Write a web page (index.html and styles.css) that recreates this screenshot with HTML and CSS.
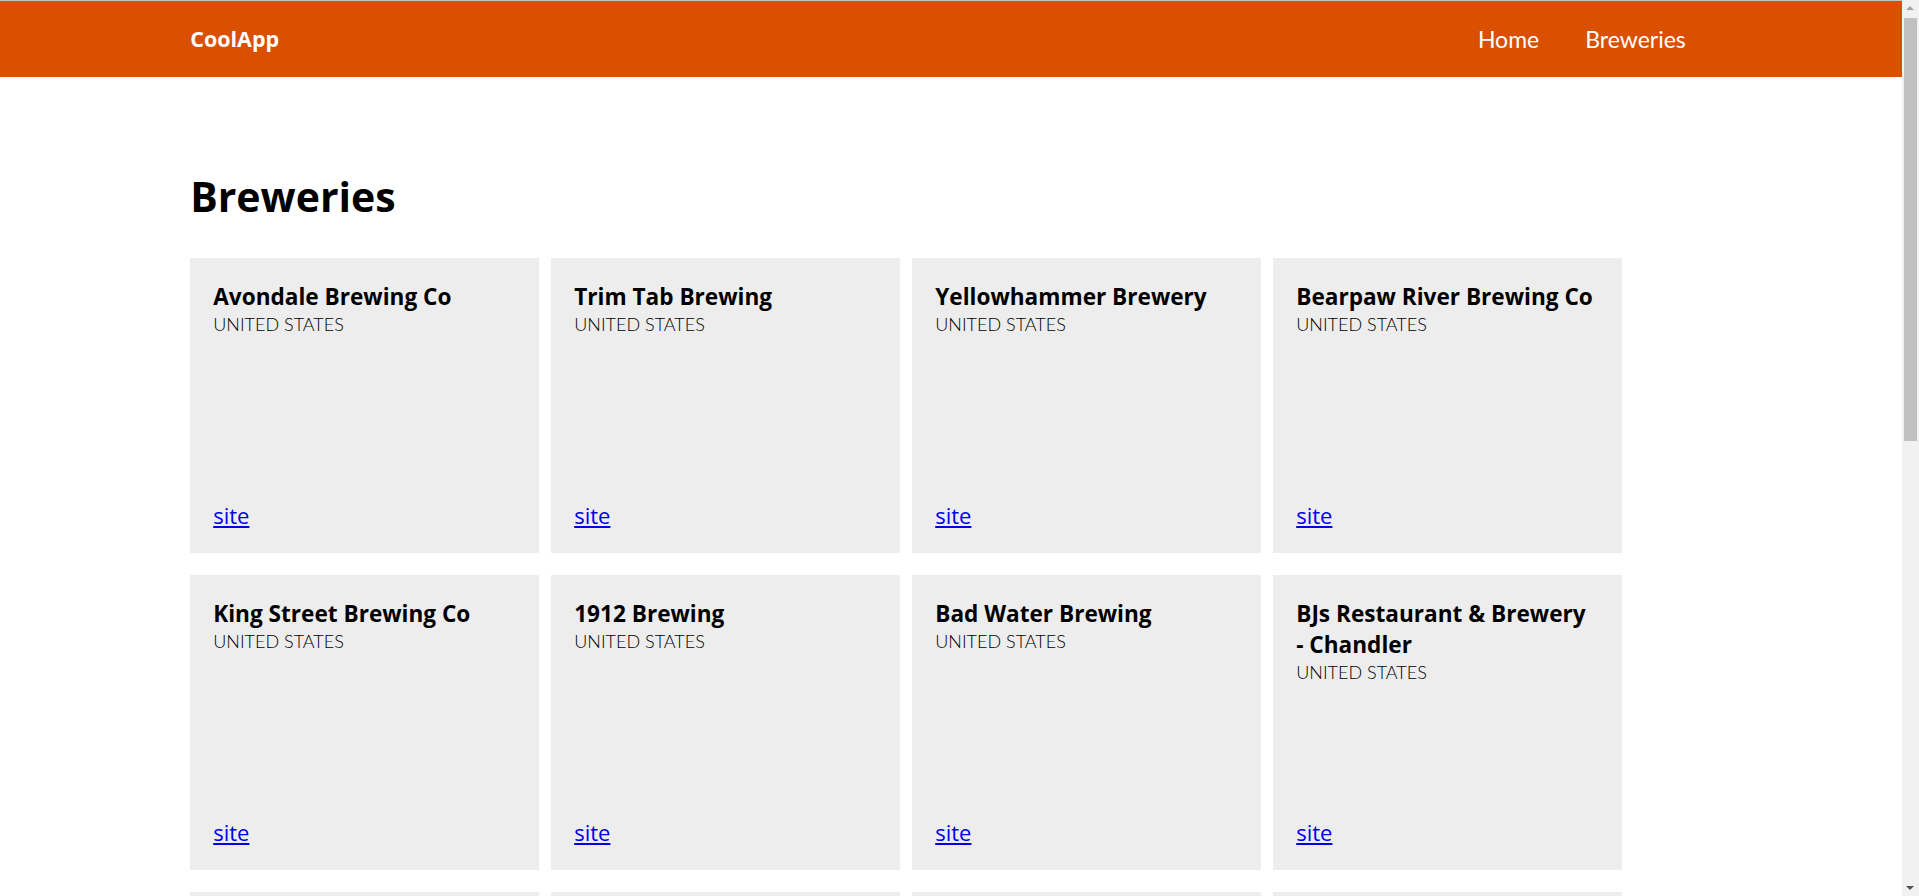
FILE: index.html
```html
<!DOCTYPE html>
<html lang="en">
<head>
<meta charset="utf-8">
<title>CoolApp</title>
<link rel="stylesheet" href="styles.css">
</head>
<body>
<div class="page">
  <header class="topbar">
    <div class="container topbar-inner">
      <a class="brand" href="#">CoolApp</a>
      <nav class="nav">
        <a class="nav-link" href="#">Home</a>
        <a class="nav-link" href="#">Breweries</a>
      </nav>
    </div>
  </header>
  <main class="container">
    <h1 class="page-title">Breweries</h1>
    <div class="grid">
      <div class="card"><h2 class="card-title">Avondale Brewing Co</h2><p class="card-country">UNITED STATES</p><a class="card-link" href="#">site</a></div>
      <div class="card"><h2 class="card-title">Trim Tab Brewing</h2><p class="card-country">UNITED STATES</p><a class="card-link" href="#">site</a></div>
      <div class="card"><h2 class="card-title">Yellowhammer Brewery</h2><p class="card-country">UNITED STATES</p><a class="card-link" href="#">site</a></div>
      <div class="card"><h2 class="card-title">Bearpaw River Brewing Co</h2><p class="card-country">UNITED STATES</p><a class="card-link" href="#">site</a></div>
      <div class="card"><h2 class="card-title">King Street Brewing Co</h2><p class="card-country">UNITED STATES</p><a class="card-link" href="#">site</a></div>
      <div class="card"><h2 class="card-title">1912 Brewing</h2><p class="card-country">UNITED STATES</p><a class="card-link" href="#">site</a></div>
      <div class="card"><h2 class="card-title">Bad Water Brewing</h2><p class="card-country">UNITED STATES</p><a class="card-link" href="#">site</a></div>
      <div class="card"><h2 class="card-title">BJs Restaurant &amp; Brewery <span class="nowrap">- Chandler</span></h2><p class="card-country">UNITED STATES</p><a class="card-link" href="#">site</a></div>
      <div class="card"><h2 class="card-title">BJs Restaurant &amp; Brewery <span class="nowrap">- Peoria</span></h2><p class="card-country">UNITED STATES</p><a class="card-link" href="#">site</a></div>
      <div class="card"><h2 class="card-title">Dragoon Brewing Co</h2><p class="card-country">UNITED STATES</p><a class="card-link" href="#">site</a></div>
      <div class="card"><h2 class="card-title">Goldwater Brewing Co</h2><p class="card-country">UNITED STATES</p><a class="card-link" href="#">site</a></div>
      <div class="card"><h2 class="card-title">Grand Canyon Brewing Company</h2><p class="card-country">UNITED STATES</p><a class="card-link" href="#">site</a></div>
    </div>
  </main>
</div>
<div class="scrollbar" aria-hidden="true">
  <div class="sb-arrow sb-up"></div>
  <div class="sb-track"><div class="sb-thumb"></div></div>
  <div class="sb-arrow sb-down"></div>
</div>
</body>
</html>
```
FILE: styles.css
```css
html, body {
  margin: 0;
  padding: 0;
}
body {
  font-family: Lato, "Noto Sans", sans-serif;
  color: #000;
  background: #fff;
}
.page {
  margin-right: 17px;
}
.container {
  width: 80%;
  margin: 0 auto;
}
.topbar {
  background: #db4f00;
  border-top: 1px solid #c4c4c4;
  height: 76px;
}
.topbar-inner {
  height: 100%;
  display: flex;
  align-items: center;
  justify-content: space-between;
}
.brand {
  color: #fff;
  text-decoration: none;
  font-family: "Open Sans", Lato, sans-serif;
  font-weight: 700;
  font-size: 21.5px;
  margin-left: 0;
  margin-top: -1px;
}
.nav {
  display: flex;
  gap: 46px;
  margin-right: 26px;
  margin-top: 0;
}
.nav-link {
  color: #fff;
  text-decoration: none;
  font-size: 23px;
  font-weight: 400;
}
.page-title {
  font-family: "Open Sans", Lato, sans-serif;
  font-size: 41px;
  font-weight: 700;
  line-height: 52px;
  margin: 93px 0 36px 0;
}
.grid {
  display: grid;
  grid-template-columns: repeat(4, 349px);
  column-gap: 12px;
  row-gap: 22px;
  padding-bottom: 40px;
}
.card {
  background: #ededed;
  height: 295px;
  box-sizing: border-box;
  padding: 23px 23px 23px;
  display: flex;
  flex-direction: column;
  align-items: flex-start;
}
.card-title {
  margin: 0;
  font-family: "Open Sans", Lato, sans-serif;
  font-size: 22.6px;
  line-height: 31px;
  font-weight: 700;
}
.nowrap {
  white-space: nowrap;
}
.card-country {
  margin: 0;
  font-size: 18px;
  line-height: 25px;
  font-weight: 300;
}
.card-link {
  margin-top: auto;
  font-family: "Open Sans", "Noto Sans", sans-serif;
  font-size: 22px;
  line-height: 30px;
  color: #0000ee;
}
.scrollbar {
  position: fixed;
  top: 0;
  right: 0;
  bottom: 0;
  width: 17px;
  background: #f1f1f1;
  display: flex;
  flex-direction: column;
}
.sb-arrow {
  height: 17px;
  flex: none;
  position: relative;
}
.sb-arrow::after {
  content: "";
  position: absolute;
  left: 4px;
  width: 0;
  height: 0;
  border-left: 4px solid transparent;
  border-right: 4px solid transparent;
}
.sb-up::after {
  top: 6px;
  border-bottom: 4px solid #a3a3a3;
}
.sb-down::after {
  top: 7px;
  border-top: 4px solid #505050;
}
.sb-track {
  flex: 1;
  padding: 1px 2px;
}
.sb-thumb {
  height: 423px;
  background: #c1c1c1;
}
```
